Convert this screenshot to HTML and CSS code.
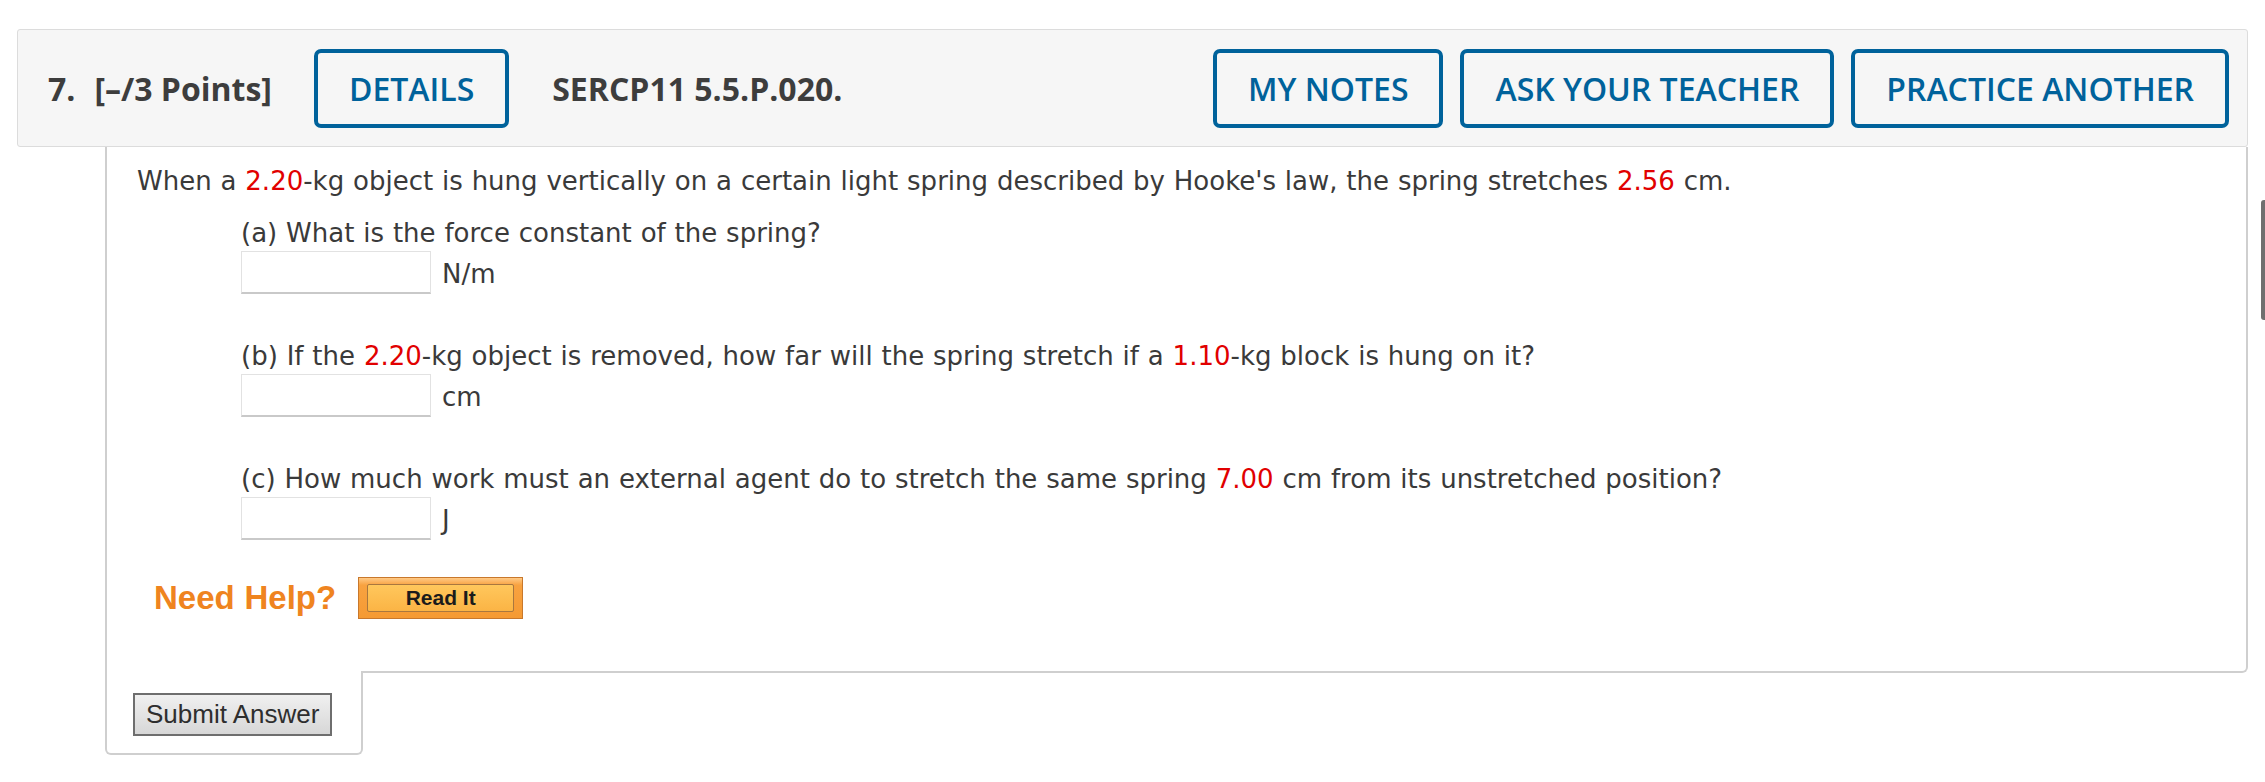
FILE: index.html
```html
<!DOCTYPE html>
<html lang="en">
<head>
<meta charset="utf-8">
<title>Question 7</title>
<link rel="stylesheet" href="styles.css">
</head>
<body>
<div class="page">
  <div class="qheader">
    <span class="qnum">7.</span>
    <span class="qpoints">[&ndash;/3 Points]</span>
    <button class="hbtn details">DETAILS</button>
    <span class="qcode">SERCP11 5.5.P.020.</span>
    <div class="hactions">
      <button class="hbtn">MY NOTES</button>
      <button class="hbtn">ASK YOUR TEACHER</button>
      <button class="hbtn">PRACTICE ANOTHER</button>
    </div>
  </div>

  <div class="qbody">
    <p class="intro">When a <span class="num">2.20</span>-kg object is hung vertically on a certain light spring described by Hooke's law, the spring stretches <span class="num">2.56</span> cm.</p>

    <div class="part">
      <p class="prompt">(a) What is the force constant of the spring?</p>
      <div class="answer"><input class="ans" type="text"><span class="unit">N/m</span></div>
    </div>

    <div class="part">
      <p class="prompt">(b) If the <span class="num">2.20</span>-kg object is removed, how far will the spring stretch if a <span class="num">1.10</span>-kg block is hung on it?</p>
      <div class="answer"><input class="ans" type="text"><span class="unit">cm</span></div>
    </div>

    <div class="part">
      <p class="prompt">(c) How much work must an external agent do to stretch the same spring <span class="num">7.00</span> cm from its unstretched position?</p>
      <div class="answer"><input class="ans" type="text"><span class="unit">J</span></div>
    </div>

    <div class="help">
      <span class="need">Need Help?</span>
      <button class="readit"><span class="readit-inner">Read It</span></button>
    </div>
  </div>

  <div class="submit-tab">
    <button class="submit">Submit Answer</button>
  </div>
</div>
<div class="scroll-thumb"></div>
</body>
</html>
```

FILE: styles.css
```css
html, body {
  margin: 0;
  padding: 0;
  background: #ffffff;
}

.page {
  padding: 29px 17px 0 17px;
}

/* ---------- header ---------- */
.qheader {
  display: flex;
  align-items: center;
  height: 118px;
  box-sizing: border-box;
  padding: 0 18px 0 30px;
  background: #f6f6f6;
  border: 1px solid #dcdcdc;
  border-radius: 3px;
  font-family: "Open Sans", sans-serif;
  font-size: 32px;
  font-weight: 700;
  color: #3d3d3d;
}

.qnum {
  margin-right: 19px;
}

.qpoints {
  margin-right: 42px;
}

.qcode {
  margin-left: 43px;
}

.hbtn {
  height: 79px;
  box-sizing: border-box;
  padding: 0 31px;
  background: transparent;
  border: 4px solid #00629b;
  border-radius: 7px;
  font-family: "Open Sans", sans-serif;
  font-size: 32px;
  font-weight: 600;
  color: #00629b;
  cursor: pointer;
}

.hactions {
  margin-left: auto;
  display: flex;
  gap: 17px;
}

/* ---------- body ---------- */
.qbody {
  margin-left: 88px;
  padding: 18px 30px 52px 30px;
  border-left: 2px solid #cfcfcf;
  border-right: 2px solid #cfcfcf;
  border-bottom: 2px solid #cfcfcf;
  border-bottom-right-radius: 6px;
  font-family: Verdana, "DejaVu Sans", sans-serif;
  font-size: 26px;
  word-spacing: 0.6px;
  line-height: 32px;
  color: #3a3a3a;
}

.num {
  color: #e10000;
}

.intro {
  margin: 0 0 20px 0;
}

.part {
  margin-left: 104px;
}

.part + .part {
  margin-top: 46px;
}

.prompt {
  margin: 0 0 2px 0;
}

.answer {
  display: flex;
  align-items: center;
  gap: 11px;
}

.ans {
  width: 190px;
  height: 43px;
  box-sizing: border-box;
  margin: 0;
  border: 1px solid #e2e2e2;
  border-bottom: 2px solid #c9c9c9;
  background: #ffffff;
  font-size: 20px;
}

.unit {
  padding-top: 2px;
}

.help {
  display: flex;
  align-items: center;
  gap: 22px;
  margin-top: 37px;
  margin-left: 17px;
}

.need {
  font-family: "Liberation Sans", Arial, sans-serif;
  font-weight: 700;
  font-size: 33px;
  line-height: 42px;
  color: #ef8420;
}

.readit {
  width: 165px;
  height: 42px;
  box-sizing: border-box;
  padding: 6px 8px;
  margin: 0;
  display: flex;
  background: linear-gradient(#ffc985 0%, #f8a240 18%, #f59a33 100%);
  border: 1px solid #c8782c;
  cursor: pointer;
}

.readit-inner {
  flex: 1;
  display: flex;
  align-items: center;
  justify-content: center;
  background: linear-gradient(#ffc75c, #fbb445);
  border: 1px solid #a9773f;
  border-radius: 2px;
  font-family: "Liberation Sans", Arial, sans-serif;
  font-weight: 700;
  font-size: 21px;
  color: #1b1b1b;
}

/* ---------- submit tab ---------- */
.submit-tab {
  width: fit-content;
  margin-left: 88px;
  margin-top: -2px;
  padding: 22px 29px 17px 26px;
  background: #ffffff;
  border-left: 2px solid #cfcfcf;
  border-right: 2px solid #cfcfcf;
  border-bottom: 2px solid #cfcfcf;
  border-radius: 0 0 6px 6px;
}

.submit {
  display: block;
  height: 43px;
  box-sizing: border-box;
  padding: 0 11px;
  margin: 0;
  background: linear-gradient(#f0f0f0, #d7d7d7);
  border: 2px solid #6e6e6e;
  font-family: "Liberation Sans", Arial, sans-serif;
  font-size: 26px;
  color: #2e2e2e;
  cursor: pointer;
}

.scroll-thumb {
  position: absolute;
  left: 2261px;
  top: 200px;
  width: 4px;
  height: 120px;
  border-radius: 3px 0 0 3px;
  background: #6f6f6f;
}
```
